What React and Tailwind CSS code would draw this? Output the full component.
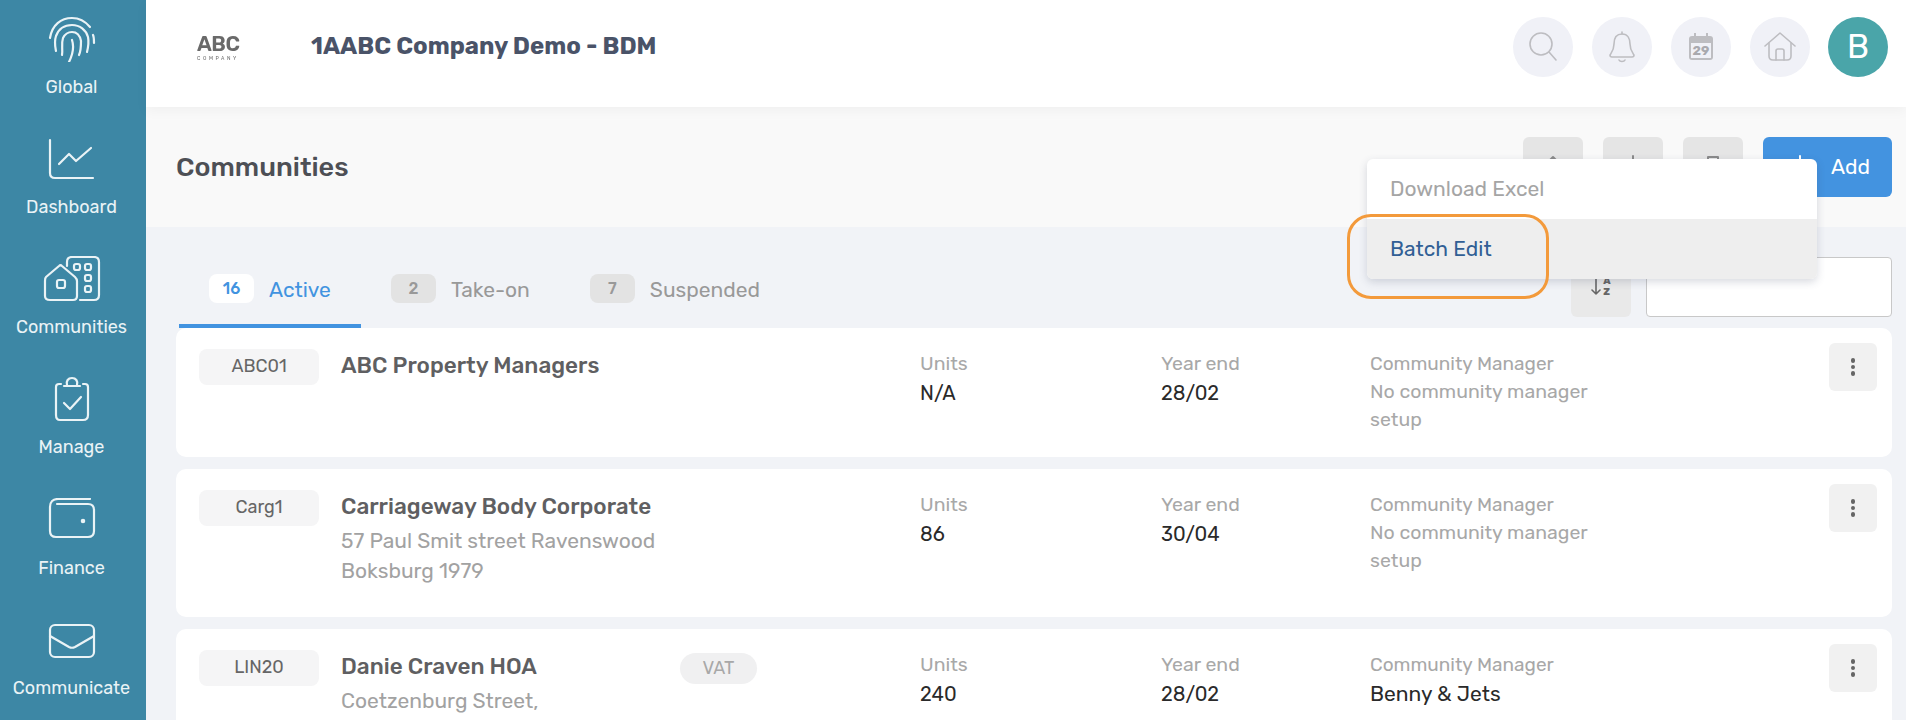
import React from "react";

const S = ({ w, h, className = "", children }) => (
  <svg width={w} height={h} viewBox={`0 0 ${w} ${h}`} fill="none" stroke="currentColor" strokeLinecap="round" strokeLinejoin="round" className={className}>
    {children}
  </svg>
);

const Fingerprint = () => (
  <S w={48} h={46}>
    <g strokeWidth="2.2">
      <path d="M2 22 C4 9 13 2 24 2 C31 2 37 5 42 11" />
      <path d="M45 19 C46 21 46 24 46 27" />
      <path d="M8 35 C7 30 6 26 8 20 C11 12 17 9 24 9 C32 9 38 14 40 21 C41 26 40 32 39 36" />
      <path d="M14 39 C15 33 13 28 15 22 C17 18 20 16 24 16 C29 16 32 20 33 25 C33 30 33 35 31 39" />
      <path d="M24 24 C26 30 25 38 21 46" />
    </g>
  </S>
);
const Dash = () => (
  <S w={48} h={42}>
    <g strokeWidth="2.2">
      <path d="M2 2 V35 C2 38 4 40 7 40 H45" />
      <path d="M11 26 L21 16 L28 23 L43 10" />
    </g>
  </S>
);
const Comm = () => (
  <S w={58} h={46}>
    <g strokeWidth="2.2">
      <path d="M3 21 L16 10 C17 9 18 9 19 10 L32 21 C33 22 34 23 34 25 V40 C34 43 32 44 30 44 H7 C4 44 2 43 2 40 V25 C2 23 2 22 3 21 Z" />
      <rect x="14" y="24" width="8" height="8" rx="2" />
      <path d="M24 10 V6 C24 3 26 1 29 1 H51 C54 1 56 3 56 6 V39 C56 42 54 44 51 44 H37" />
      <rect x="31" y="8" width="6" height="6" rx="2" />
      <rect x="42" y="8" width="6" height="6" rx="2" />
      <rect x="42" y="19" width="6" height="6" rx="2" />
      <rect x="42" y="30" width="6" height="6" rx="2" />
    </g>
  </S>
);
const Manage = () => (
  <S w={36} h={46}>
    <g strokeWidth="2.2">
      <path d="M7 8 H5 C3 8 2 9 2 11 V39 C2 42 3 44 6 44 H29 C32 44 34 42 34 39 V11 C34 9 33 8 31 8 H29" />
      <path d="M10 10 H26" />
      <path d="M13 9 C12 5 14 2 18 2 C22 2 24 5 23 9" />
      <path d="M10 27 L16 33 L27 21" />
    </g>
  </S>
);
const Wallet = () => (
  <S w={48} h={42}>
    <g strokeWidth="2.2">
      <path d="M9 6 H40 C44 6 46 8 46 12 V33 C46 37 44 39 40 39 H8 C4 39 2 37 2 33 V9 C2 4 5 1 10 1 H42" />
      <circle cx="35" cy="23" r="1.2" fill="currentColor" />
    </g>
  </S>
);
const Mail = () => (
  <S w={48} h={36}>
    <g strokeWidth="2.2">
      <rect x="2" y="2" width="44" height="32" rx="5" />
      <path d="M2 13 L21 24 C23 25 25 25 27 24 L46 13" />
    </g>
  </S>
);

const nav = [
  ["Global", Fingerprint, "h-[46px] mt-[16px]", "mt-[13px]"],
  ["Dashboard", Dash, "h-[42px] mt-[18px]", "mt-[15px]"],
  ["Communities", Comm, "h-[46px] mt-[16px]", "mt-[13px]"],
  ["Manage", Manage, "h-[46px] mt-[16px]", "mt-[13px]"],
  ["Finance", Wallet, "h-[42px] mt-[18px]", "mt-[16px]"],
  ["Communicate", Mail, "h-[36px] mt-[23px]", "mt-[17px]"],
];

const cards = [
  { code: "ABC01", name: "ABC Property Managers", addr: [], units: "N/A", ye: "28/02", cm: null, h: "h-[129px]" },
  { code: "Carg1", name: "Carriageway Body Corporate", addr: ["57 Paul Smit street Ravenswood", "Boksburg 1979"], units: "86", ye: "30/04", cm: null, h: "h-[148px]" },
  { code: "LIN20", name: "Danie Craven HOA", addr: ["Coetzenburg Street,"], units: "240", ye: "28/02", cm: "Benny & Jets", vat: true, h: "h-[148px]" },
];

const Round = ({ children }) => (
  <div className="w-[60px] h-[60px] rounded-full bg-[#f0f1f7] flex items-center justify-center text-[#bdbdc1]">{children}</div>
);
const TopBtn = ({ children }) => (
  <div className="w-[60px] h-[60px] rounded-[6px] bg-[#e5e5e5] flex justify-center pt-[18px] text-[#8a8a8a]">{children}</div>
);

export default function App() {
  return (
    <div className="relative flex h-[720px] w-[1906px] overflow-hidden bg-[#f1f3f7] font-['Rubik','Inter',sans-serif]">
      <aside className="w-[146px] shrink-0 bg-[#3d87a5] text-[#eaf3f6] pr-[3px]">
        {nav.map(([label, Icon, cls, lab]) => (
          <div key={label} className="h-[120px] flex flex-col items-center">
            <div className={`${cls} flex items-start justify-center`}><Icon /></div>
            <div className={`text-[18px] leading-[24px] ${lab}`}>{label}</div>
          </div>
        ))}
      </aside>

      <main className="flex-1 min-w-0 flex flex-col">
        <header className="h-[107px] shrink-0 bg-white flex items-center pr-[18px] shadow-[0_4px_12px_rgba(0,0,0,0.04)] relative z-10">
          <div className="w-[165px] pl-[51px] flex flex-col items-start text-[#6a6a6a] blur-[0.6px] -mt-[14px]">
            <div className="text-[21px] leading-[22px] font-semibold tracking-[-0.5px]">ABC</div>
            <div className="text-[5px] leading-[6px] tracking-[2.6px]">COMPANY</div>
          </div>
          <div className="text-[24px] font-bold text-[#4a5368] -mt-[15px]">1AABC Company Demo - BDM</div>
          <div className="ml-auto flex gap-[18px] -mt-[13px]">
            <div className="flex gap-[19px]">
              <Round>
                <S w={32} h={32}>
                  <circle cx="14" cy="13" r="11" strokeWidth="1.6" />
                  <path d="M22 21 L29 29" strokeWidth="1.6" />
                </S>
              </Round>
              <Round>
                <S w={28} h={32}>
                  <path d="M14 3 C8 3 6 8 6 13 C6 19 4 21 2 24 C2 25 2 26 4 26 H24 C26 26 26 25 26 24 C24 21 22 19 22 13 C22 8 20 3 14 3 Z" strokeWidth="1.6" />
                  <path d="M14 1 V3 M11 29 C12 31 16 31 17 29" strokeWidth="1.6" />
                </S>
              </Round>
              <Round>
                <div className="relative w-[24px] h-[24px] rounded-[3px] bg-[#bdbdc1] flex items-end justify-center mt-[2px]">
                  <span className="absolute -top-[3px] left-[5px] w-[2px] h-[4px] bg-[#bdbdc1]" />
                  <span className="absolute -top-[3px] right-[5px] w-[2px] h-[4px] bg-[#bdbdc1]" />
                  <div className="w-[20px] h-[15px] mb-[2px] bg-[#f0f1f7] text-[#a9a9ae] text-[13px] leading-[15px] font-bold text-center">29</div>
                </div>
              </Round>
              <Round>
                <S w={32} h={30}>
                  <path d="M1 14 L16 1 L31 14" strokeWidth="1.6" />
                  <path d="M5 11 V24 C5 27 7 28 9 28 H23 C25 28 27 27 27 24 V11" strokeWidth="1.6" />
                  <path d="M12 28 V19 C12 18 13 17 14 17 H18 C19 17 20 18 20 19 V28" strokeWidth="1.6" />
                </S>
              </Round>
            </div>
            <div className="w-[60px] h-[60px] rounded-full bg-[#4aa5a9] flex items-center justify-center text-white text-[33px]">B</div>
          </div>
        </header>

        <section className="h-[120px] shrink-0 bg-[#f9f9f9] flex pl-[30px] pr-[14px]">
          <h1 className="mt-[43px] text-[27px] leading-[34px] font-medium text-[#4d4f55]">Communities</h1>
          <div className="ml-auto mt-[30px] flex">
            <TopBtn>
              <S w={16} h={20}><path d="M8 2 V18 M4 6 L8 2 L12 6" strokeWidth="2" /></S>
            </TopBtn>
            <div className="w-[20px]" />
            <TopBtn>
              <S w={16} h={20}><path d="M8 1 V18" strokeWidth="2" /></S>
            </TopBtn>
            <div className="w-[20px]" />
            <TopBtn>
              <S w={24} h={20}><path d="M7 5 V2 H17 V5 M2 5 H22" strokeWidth="2" /></S>
            </TopBtn>
            <div className="w-[20px]" />
            <div className="w-[129px] h-[60px] rounded-[6px] bg-[#4393e0] text-white flex items-center pl-[26px]">
              <S w={22} h={24} className="mr-[20px]"><path d="M11 1 V23 M1 12 H21" strokeWidth="2" /></S>
              <span className="text-[21px]">Add</span>
            </div>
          </div>
        </section>

        <section className="flex-1 min-h-0 pl-[30px] pr-[14px]">
          <div className="h-[101px] flex justify-between">
            <div className="self-end flex ml-[3px]">
              {[
                ["16", "Active", "w-[182px]", true],
                ["2", "Take-on", "w-[199px]", false],
                ["7", "Suspended", "w-[200px]", false],
              ].map(([n, t, w, on]) => (
                <div key={t} className={`${w} h-[54px] pl-[30px] flex items-start border-b-4 ${on ? "border-[#4293e0]" : "border-transparent"}`}>
                  <span className={`w-[45px] h-[29px] rounded-[8px] flex items-center justify-center text-[16px] font-medium ${on ? "bg-white text-[#4293e0]" : "bg-[#e3e3e3] text-[#999]"}`}>{n}</span>
                  <span className={`ml-[15px] mt-[1px] text-[21px] leading-[30px] ${on ? "text-[#4293e0]" : "text-[#999]"}`}>{t}</span>
                </div>
              ))}
            </div>
            <div className="flex gap-[15px] mt-[30px] h-[60px]">
              <div className="w-[60px] h-[60px] rounded-[6px] bg-[#e9e9e9] flex items-start justify-center pt-[19px] text-[#666] gap-[2px]">
                <S w={10} h={20}><path d="M5 1 V18 M1 14 L5 18 L9 14" strokeWidth="1.6" /></S>
                <div className="text-[10px] leading-[11px] font-extrabold">A<br />Z</div>
              </div>
              <div className="w-[246px] h-[60px] bg-white border border-[#c8c8c8] rounded-[4px]" />
            </div>
          </div>

          <div className="flex flex-col gap-[12px]">
            {cards.map((c) => (
              <div key={c.code} className={`${c.h} shrink-0 bg-white rounded-[10px] flex items-start pl-[23px] pr-[15px]`}>
                <div className="mt-[21px] w-[120px] h-[36px] rounded-[8px] bg-[#f5f5f6] flex items-center justify-center text-[#666] text-[18px] pb-[2px]">{c.code}</div>
                <div className="ml-[22px] w-[416px] mt-[21px]">
                  <div className="flex items-start justify-between mb-[2px]">
                    <div className="text-[22.5px] leading-[34px] font-medium text-[#5f5f62]">{c.name}</div>
                    {c.vat && <div className="mt-[3px] w-[77px] h-[31px] rounded-full bg-[#f0f0f1] text-[#a8a8a8] text-[18px] flex items-center justify-center">VAT</div>}
                  </div>
                  {c.addr.map((l) => (
                    <div key={l} className="text-[21px] leading-[30px] text-[#a2a2a2]">{l}</div>
                  ))}
                </div>
                <div className="ml-[163px] w-[241px] mt-[22px] text-[19.5px] leading-[28px]">
                  <div className="text-[#a8a8a8]">Units</div>
                  <div className="text-[#2a2a2a] text-[20px] mt-[1px]">{c.units}</div>
                </div>
                <div className="w-[209px] mt-[22px] text-[19.5px] leading-[28px]">
                  <div className="text-[#a8a8a8]">Year end</div>
                  <div className="text-[#2a2a2a] text-[20px] mt-[1px]">{c.ye}</div>
                </div>
                <div className="w-[280px] mt-[22px] text-[19px] leading-[28px]">
                  <div className="text-[#a8a8a8]">Community Manager</div>
                  {c.cm ? (
                    <div className="text-[#2a2a2a] text-[21px] mt-[1px]">{c.cm}</div>
                  ) : (
                    <div className="text-[#a8a8a8] text-[19.5px]">No community manager<br />setup</div>
                  )}
                </div>
                <div className="ml-auto mt-[15px] w-[48px] h-[48px] rounded-[6px] bg-[#f1f1f1] flex flex-col items-center justify-center gap-[2px]">
                  <span className="w-[4.5px] h-[4.5px] rounded-full bg-[#666]" />
                  <span className="w-[4.5px] h-[4.5px] rounded-full bg-[#666]" />
                  <span className="w-[4.5px] h-[4.5px] rounded-full bg-[#666]" />
                </div>
              </div>
            ))}
          </div>
        </section>
      </main>

      <div className="absolute z-20 left-[1367px] top-[159px] w-[450px] rounded-[6px] bg-white shadow-[0_3px_8px_rgba(60,70,100,0.2)] overflow-hidden">
        <div className="h-[60px] pl-[23px] flex items-center text-[21px] text-[#a5a5a5]">Download Excel</div>
        <div className="h-[60px] pl-[23px] flex items-center text-[21px] text-[#315f95] bg-[#eeeeee]">Batch Edit</div>
      </div>
      <div className="absolute z-30 left-[1347px] top-[214px] w-[202px] h-[85px] rounded-[24px] border-[3px] border-[#f39a3b]" />
    </div>
  );
}
